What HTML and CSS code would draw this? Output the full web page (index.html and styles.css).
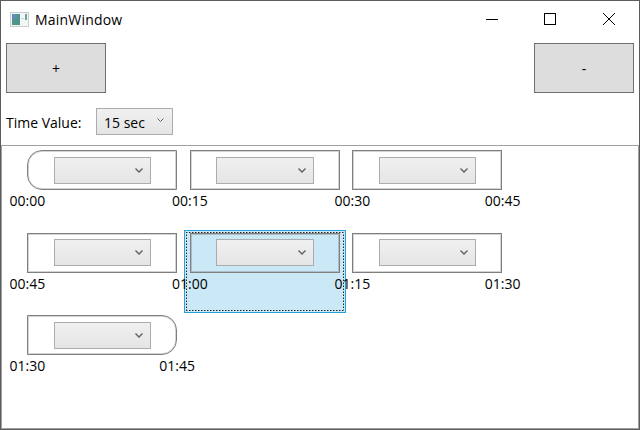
FILE: index.html
```html
<!DOCTYPE html>
<html lang="en">
<head>
    <meta charset="UTF-8">
    <meta name="viewport" content="width=device-width, initial-scale=1.0">
    <title>MainWindow</title>
    <link rel="stylesheet" href="styles.css">
</head>
<body>
    <div class="window">
        <!-- Title bar -->
        <div class="titlebar">
            <svg class="app-icon" width="19" height="15" viewBox="0 0 19 15">
                <rect x="0.5" y="0.5" width="18" height="14" fill="#f4f6f6" stroke="#c8ccd0"/>
                <rect x="2" y="2" width="8" height="11" fill="#4f9488"/>
                <rect x="2" y="2" width="5" height="5" fill="#5d8fb0"/>
                <rect x="11" y="6" width="3" height="1" fill="#b8d8d0"/>
                <rect x="15" y="2" width="2" height="6" fill="#6fa59a"/>
            </svg>
            <span class="title">MainWindow</span>
            <div class="caption-buttons">
                <svg width="12" height="12" viewBox="0 0 12 12"><path d="M0 6.5H12" stroke="#000" fill="none"/></svg>
                <svg width="12" height="12" viewBox="0 0 12 12"><rect x="0.5" y="0.5" width="11" height="11" stroke="#000" fill="none"/></svg>
                <svg class="close-icon" width="12" height="12" viewBox="0 0 12 12"><path d="M0 0L12 12M12 0L0 12" stroke="#000" fill="none"/></svg>
            </div>
        </div>

        <!-- Add / remove -->
        <div class="toolbar">
            <button class="big-btn">+</button>
            <button class="big-btn">-</button>
        </div>

        <!-- Time value -->
        <div class="time-row">
            <span class="time-label">Time Value:</span>
            <div class="combo combo-time">
                <span>15 sec</span>
                <svg class="chevron" width="7" height="5" viewBox="0 0 7 5"><path d="M0.5 0.5L3.5 3.5L6.5 0.5" stroke="#606060" fill="none"/></svg>
            </div>
        </div>

        <!-- Timeline items -->
        <div class="list">
            <div class="item">
                <div class="card card-start">
                    <div class="combo combo-card"><svg class="chevron" width="8" height="5" viewBox="0 0 8 5"><path d="M0.5 0.5L4 4L7.5 0.5" stroke="#606060" stroke-width="1.4" fill="none"/></svg></div>
                </div>
                <div class="times"><span>00:00</span></div>
            </div>
            <div class="item">
                <div class="card">
                    <div class="combo combo-card"><svg class="chevron" width="8" height="5" viewBox="0 0 8 5"><path d="M0.5 0.5L4 4L7.5 0.5" stroke="#606060" stroke-width="1.4" fill="none"/></svg></div>
                </div>
                <div class="times"><span>00:15</span></div>
            </div>
            <div class="item">
                <div class="card">
                    <div class="combo combo-card"><svg class="chevron" width="8" height="5" viewBox="0 0 8 5"><path d="M0.5 0.5L4 4L7.5 0.5" stroke="#606060" stroke-width="1.4" fill="none"/></svg></div>
                </div>
                <div class="times"><span>00:30</span><span>00:45</span></div>
            </div>
            <div class="item">
                <div class="card">
                    <div class="combo combo-card"><svg class="chevron" width="8" height="5" viewBox="0 0 8 5"><path d="M0.5 0.5L4 4L7.5 0.5" stroke="#606060" stroke-width="1.4" fill="none"/></svg></div>
                </div>
                <div class="times"><span>00:45</span></div>
            </div>
            <div class="item selected">
                <div class="card">
                    <div class="combo combo-card"><svg class="chevron" width="8" height="5" viewBox="0 0 8 5"><path d="M0.5 0.5L4 4L7.5 0.5" stroke="#606060" stroke-width="1.4" fill="none"/></svg></div>
                </div>
                <div class="times"><span>01:00</span></div>
            </div>
            <div class="item">
                <div class="card">
                    <div class="combo combo-card"><svg class="chevron" width="8" height="5" viewBox="0 0 8 5"><path d="M0.5 0.5L4 4L7.5 0.5" stroke="#606060" stroke-width="1.4" fill="none"/></svg></div>
                </div>
                <div class="times"><span>01:15</span><span>01:30</span></div>
            </div>
            <div class="item">
                <div class="card card-end">
                    <div class="combo combo-card"><svg class="chevron" width="8" height="5" viewBox="0 0 8 5"><path d="M0.5 0.5L4 4L7.5 0.5" stroke="#606060" stroke-width="1.4" fill="none"/></svg></div>
                </div>
                <div class="times"><span>01:30</span><span>01:45</span></div>
            </div>
        </div>
    </div>
</body>
</html>
```

FILE: styles.css
```css
/* General Body Styling */
html, body {
    margin: 0;
    padding: 0;
}

body {
    font-family: 'Open Sans', 'Noto Sans', Arial, sans-serif;
    font-size: 14px;
    color: #000;
    background-color: #fff;
}

/* Window Frame */
.window {
    width: 640px;
    height: 430px;
    box-sizing: border-box;
    border: 1px solid #5c5c5c;
    display: flex;
    flex-direction: column;
    overflow: hidden;
}

/* Title Bar */
.titlebar {
    height: 37px;
    box-sizing: border-box;
    flex: none;
    display: flex;
    align-items: center;
    padding: 0 0 1px 9px;
}

.app-icon {
    flex: none;
}

.title {
    margin: 1px 0 0 6px;
    line-height: 20px;
    letter-spacing: 0.2px;
}

.caption-buttons {
    margin-left: auto;
    margin-right: 24px;
    display: flex;
    gap: 46px;
}

.close-icon {
    margin-left: 1px;
}

/* Add / Remove Buttons */
.toolbar {
    flex: none;
    height: 50px;
    margin-top: 5px;
    padding: 0 5px;
    display: flex;
    justify-content: space-between;
}

.big-btn {
    width: 100px;
    height: 50px;
    background-color: #dddddd;
    border: 1px solid #707070;
    border-radius: 0;
    padding: 0;
    font-family: inherit;
    font-size: 14px;
    color: #000;
}

/* Time Value Row */
.time-row {
    flex: none;
    height: 27px;
    margin-top: 15px;
    padding-left: 5px;
    display: flex;
    align-items: center;
}

.time-label {
    width: 90px;
    padding-top: 1px;
}

.combo {
    box-sizing: border-box;
    border: 1px solid #acacac;
    background: linear-gradient(#f0f0f0, #e5e5e5);
    display: flex;
    align-items: center;
}

.combo-time {
    width: 77px;
    height: 27px;
    padding-left: 7px;
    padding-top: 1px;
}

.combo-time .chevron {
    margin-left: auto;
    margin-right: 8px;
    margin-top: -4px;
}

/* Timeline List */
.list {
    flex: 1;
    box-sizing: border-box;
    margin-top: 10px;
    border: 1px solid #a0a0a0;
    padding: 1px 0 0 19px;
    display: grid;
    grid-template-columns: 162.5px 162.5px 163px;
    grid-auto-rows: 82.5px;
}

.item {
    box-sizing: border-box;
    position: relative;
    padding: 3px 6px 0 6px;
}

.selected {
    height: 83px;
    border: 1px solid #26a0da;
    background-color: #cbe8f6;
    padding: 2px 5px 0 5px;
}

/* focus rectangle, dots every 3px like the original */
.selected::after {
    content: "";
    position: absolute;
    top: 1px;
    left: 1px;
    right: 1px;
    bottom: 1px;
    background-image:
        repeating-linear-gradient(90deg, #222 0 1px, #888 1px 2px, transparent 2px 3px),
        repeating-linear-gradient(90deg, #222 0 1px, #888 1px 2px, transparent 2px 3px),
        repeating-linear-gradient(0deg, #222 0 1px, #888 1px 2px, transparent 2px 3px),
        repeating-linear-gradient(0deg, #222 0 1px, #888 1px 2px, transparent 2px 3px);
    background-size: 100% 1px, 100% 1px, 1px 100%, 1px 100%;
    background-position: left top, left bottom, left top, right top;
    background-repeat: no-repeat;
    pointer-events: none;
}

.card {
    box-sizing: border-box;
    width: 150px;
    height: 40px;
    border: 1px solid #7f7f7f;
    box-shadow: inset 0 0 0 1px #d4d4d4;
    background-color: #fff;
    padding-left: 25.75px;
    display: flex;
    align-items: center;
}

.selected .card {
    background-color: transparent;
    box-shadow: inset 0 0 0 1px #a9bec8;
}

.card-start {
    border-radius: 15px 0 0 15px;
}

.card-end {
    border-radius: 0 15px 15px 0;
}

.combo-card {
    width: 97.5px;
    height: 27px;
}

.combo-card .chevron {
    margin-left: auto;
    margin-right: 7px;
}

.times {
    margin: 1px -17.5px 0 -17.5px;
    display: flex;
    justify-content: space-between;
    line-height: 20px;
}
```
